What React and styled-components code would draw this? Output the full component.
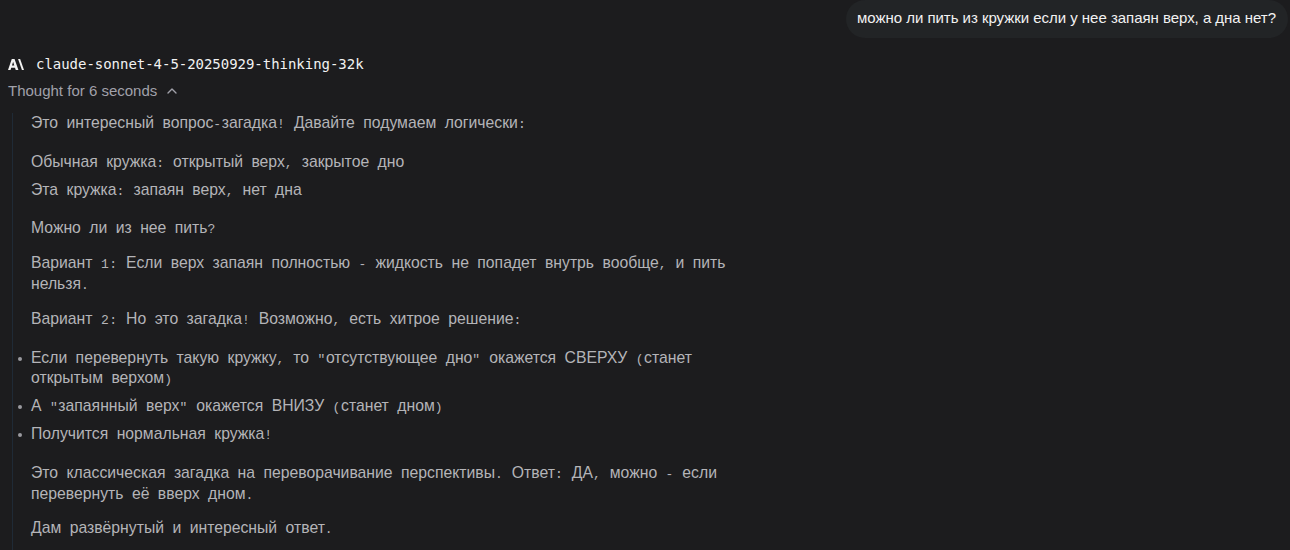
import React from "react";
import styled, { createGlobalStyle } from "styled-components";
import { ChevronUp } from "lucide-react";

const GlobalStyle = createGlobalStyle`
    html, body {
        margin: 0;
        padding: 0;
        height: 100%;
        overflow: hidden;
        background-color: #1c1c1e;
    }
`;

// cyrillic falls back to a sans font in the reference, everything else stays mono
const MixedText = ({ children }) => (
    <>
        {children.split(/([А-Яа-яЁё]+)/).map((part, key) =>
            /^[А-Яа-яЁё]+$/.test(part) ? part : <Mono key={key}>{part}</Mono>
        )}
    </>
);

const App = () => {
    return (
        <Page>
            <GlobalStyle />
            <UserRow>
                <UserBubble>можно ли пить из кружки если у нее запаян верх, а дна нет?</UserBubble>
            </UserRow>

            <ModelRow>
                <AnthropicLogo viewBox="0 0.6 17.8 10.8" preserveAspectRatio="none" aria-hidden="true">
                    <path d="M4.2 0.6h3.1L11.6 11.4H8.6L7.8 9.2H3.6L2.8 11.4H0ZM4.4 7h2.6L5.7 3.4Z" />
                    <path d="M11.2 0.6h2.3l4.3 10.8h-2.3Z" />
                </AnthropicLogo>
                <ModelName>claude-sonnet-4-5-20250929-thinking-32k</ModelName>
            </ModelRow>

            <ThoughtToggle>
                Thought for 6 seconds
                <ChevronUp size={16} strokeWidth={2} />
            </ThoughtToggle>

            <ThoughtBody>
                <Para><MixedText>Это интересный вопрос-загадка! Давайте подумаем логически:</MixedText></Para>
                <TightGroup>
                    <Para><MixedText>Обычная кружка: открытый верх, закрытое дно</MixedText></Para>
                    <Para><MixedText>Эта кружка: запаян верх, нет дна</MixedText></Para>
                </TightGroup>
                <Para><MixedText>Можно ли из нее пить?</MixedText></Para>
                <Para><MixedText>Вариант 1: Если верх запаян полностью - жидкость не попадет внутрь вообще, и пить нельзя.</MixedText></Para>
                <Para><MixedText>Вариант 2: Но это загадка! Возможно, есть хитрое решение:</MixedText></Para>
                <BulletList>
                    <Bullet><MixedText>Если перевернуть такую кружку, то "отсутствующее дно" окажется СВЕРХУ (станет открытым верхом)</MixedText></Bullet>
                    <Bullet><MixedText>А "запаянный верх" окажется ВНИЗУ (станет дном)</MixedText></Bullet>
                    <Bullet><MixedText>Получится нормальная кружка!</MixedText></Bullet>
                </BulletList>
                <Para><MixedText>Это классическая загадка на переворачивание перспективы. Ответ: ДА, можно - если перевернуть её вверх дном.</MixedText></Para>
                <Para><MixedText>Дам развёрнутый и интересный ответ.</MixedText></Para>
            </ThoughtBody>
        </Page>
    );
};

const Page = styled.div`
    width: 1290px;
    height: 550px;
    overflow: hidden;
    box-sizing: border-box;
    background-color: #1c1c1e;
    font-family: "Liberation Sans", Arial, sans-serif;
    font-size: 15px;
    line-height: 21px;
`;

const UserRow = styled.div`
    display: flex;
    justify-content: flex-end;
    padding-right: 2px;
`;

const UserBubble = styled.div`
    box-sizing: border-box;
    height: 38px;
    padding: 7px 12px 10px 11px;
    border-radius: 19px;
    background-color: #222426;
    color: #f2f2f2;
    letter-spacing: -0.03px;
    white-space: nowrap;
`;

const ModelRow = styled.div`
    display: flex;
    align-items: center;
    gap: 12px;
    margin-top: 16px;
    padding-left: 8px;
    height: 21px;
`;

const AnthropicLogo = styled.svg`
    width: 16px;
    height: 11px;
    fill: #f2f2f2;
`;

const ModelName = styled.span`
    font-family: "DejaVu Sans Mono", monospace;
    font-size: 14px;
    letter-spacing: -0.03px;
    color: #f2f2f2;
`;

const ThoughtToggle = styled.div`
    display: flex;
    align-items: center;
    gap: 7px;
    margin-top: 5px;
    padding-left: 8px;
    color: #a1a1aa;
`;

const ThoughtBody = styled.div`
    display: flex;
    flex-direction: column;
    gap: 14px;
    margin: 12px 0 0 12px;
    padding: 0 0 20px 18px;
    width: 700px;
    border-left: 1px solid #1f2a36;
    font-size: 15.75px;
    line-height: 20.8px;
    color: #b4b4b8;
`;

const Para = styled.p`
    margin: 0;
`;

const Mono = styled.span`
    font-family: "Liberation Mono", monospace;
    font-size: 13px;
    line-height: 1;
    letter-spacing: 0.6px;
`;

const TightGroup = styled.div`
    display: flex;
    flex-direction: column;
    gap: 7px;
    margin: 4px 0;
`;

const BulletList = styled.ul`
    display: flex;
    flex-direction: column;
    gap: 7px;
    margin: 4px 0;
    padding: 0;
    list-style: none;
`;

const Bullet = styled.li`
    position: relative;

    &::before {
        content: "";
        position: absolute;
        left: -13px;
        top: 9px;
        width: 4px;
        height: 4px;
        border-radius: 50%;
        background-color: #9a9aa0;
    }
`;

export default App;
